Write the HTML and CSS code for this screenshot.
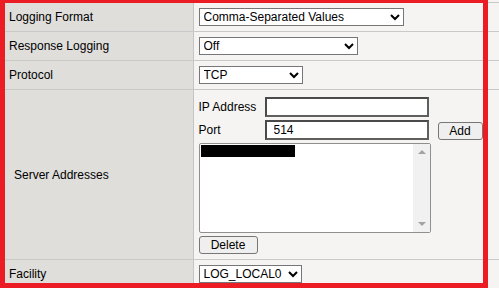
FILE: index.html
```html
<!DOCTYPE html>
<html lang="en">
<head>
  <meta charset="UTF-8">
  <title>Remote Logging</title>
  <link rel="stylesheet" href="styles.css">
</head>
<body>

  <!-- Settings table -->
  <table class="settings">
    <colgroup>
      <col class="col-label">
      <col class="col-value">
    </colgroup>
    <tr>
      <td class="label">Logging Format</td>
      <td class="value">
        <select class="sel sel-format">
          <option>Comma-Separated Values</option>
        </select>
      </td>
    </tr>
    <tr>
      <td class="label">Response Logging</td>
      <td class="value">
        <select class="sel sel-response">
          <option>Off</option>
        </select>
      </td>
    </tr>
    <tr>
      <td class="label">Protocol</td>
      <td class="value">
        <select class="sel sel-protocol">
          <option>TCP</option>
        </select>
      </td>
    </tr>
    <tr class="server-row">
      <td class="label server-label">Server Addresses</td>
      <td class="value server-value">
        <div class="server-grid">
          <span class="field-label">IP Address</span>
          <input type="text" class="field" value="">
          <span></span>
          <span class="field-label">Port</span>
          <input type="text" class="field" value="514">
          <button class="btn btn-add">Add</button>
        </div>
        <div class="listbox">
          <div class="list-items">
            <div class="redacted"></div>
          </div>
          <div class="list-scroll">
            <span class="arrow-up"></span>
            <span class="arrow-down"></span>
          </div>
        </div>
        <button class="btn btn-delete">Delete</button>
      </td>
    </tr>
    <tr>
      <td class="label">Facility</td>
      <td class="value">
        <select class="sel sel-facility">
          <option>LOG_LOCAL0</option>
        </select>
      </td>
    </tr>
  </table>

  <!-- Highlight frame -->
  <div class="highlight"></div>

</body>
</html>
```

FILE: styles.css
```css
/* Basic styling */
body {
  margin: 0;
  font-family: "Liberation Sans", Arial, sans-serif;
  font-size: 12px;
  color: #000;
  background: #f5f4f2;
  overflow: hidden;
  position: relative;
  width: 499px;
  height: 288px;
}

/* Settings table */
.settings {
  border-collapse: collapse;
  table-layout: fixed;
  width: 100%;
  margin-top: 2px;
}
.col-label { width: 193px; }
.settings td {
  border-top: 1px solid #c9c9c9;
  border-bottom: 1px solid #c9c9c9;
  height: 28px;
  padding: 0;
}
.settings td.label {
  background: #dfdedb;
  padding-left: 9px;
  border-right: 1px solid #c4c4c4;
}
.settings td.value {
  background: #f5f4f2;
  padding-left: 5px;
}

/* Drop-downs */
.sel {
  font-family: "Liberation Sans", Arial, sans-serif;
  font-size: 12px;
  height: 18px;
  border: 1px solid #767676;
  border-radius: 0;
  background: #fff;
  color: #000;
  padding: 0;
  margin: 0;
  vertical-align: middle;
}
.sel-format { width: 205px; }
.sel-response { width: 159px; }
.sel-protocol { width: 104px; }
.sel-facility { width: 103px; }

/* Server addresses */
.settings td.server-label {
  padding-left: 14px;
  box-shadow: inset 1px 0 0 #3d5f8f;
}
.settings td.server-value {
  padding-top: 7px;
  padding-bottom: 5px;
}
.server-grid {
  display: grid;
  grid-template-columns: 66px 164px auto;
  align-items: center;
  row-gap: 2px;
}
.field {
  box-sizing: border-box;
  width: 164px;
  height: 20px;
  border: 2px solid #5f5f5f;
  border-top-color: #4a4a4a;
  border-left-color: #4a4a4a;
  padding: 0 7px;
  font-family: "Liberation Sans", Arial, sans-serif;
  font-size: 12px;
  margin: 0;
}
.btn {
  font-family: "Liberation Sans", Arial, sans-serif;
  font-size: 12px;
  background: #efefef;
  border: 1px solid #767676;
  border-radius: 3px;
  height: 18px;
  padding: 0;
  color: #000;
}
.btn-add {
  width: 45px;
  margin-left: 9px;
  margin-top: 3px;
}
.btn-delete {
  width: 59px;
  margin-top: 3px;
}
.listbox {
  box-sizing: border-box;
  width: 232px;
  height: 90px;
  margin-top: 3px;
  border: 1px solid #8f8f8f;
  border-radius: 2px;
  background: #fff;
  display: flex;
}
.list-items {
  flex: 1;
  padding: 1px;
}
.redacted {
  width: 94px;
  height: 12px;
  background: #000;
}
.list-scroll {
  width: 17px;
  background: #f1f1f1;
  position: relative;
}
.arrow-up,
.arrow-down {
  position: absolute;
  left: 5px;
  width: 0;
  height: 0;
  border-left: 4px solid transparent;
  border-right: 4px solid transparent;
}
.arrow-up {
  top: 6px;
  border-bottom: 4px solid #a3a3a3;
}
.arrow-down {
  bottom: 6px;
  border-top: 4px solid #a3a3a3;
}

/* Red highlight frame */
.highlight {
  position: absolute;
  left: 0;
  top: 0;
  width: 488px;
  height: 288px;
  box-sizing: border-box;
  border-style: solid;
  border-color: #ec1c24;
  border-width: 3px 5px 5px 5px;
  pointer-events: none;
}
```
